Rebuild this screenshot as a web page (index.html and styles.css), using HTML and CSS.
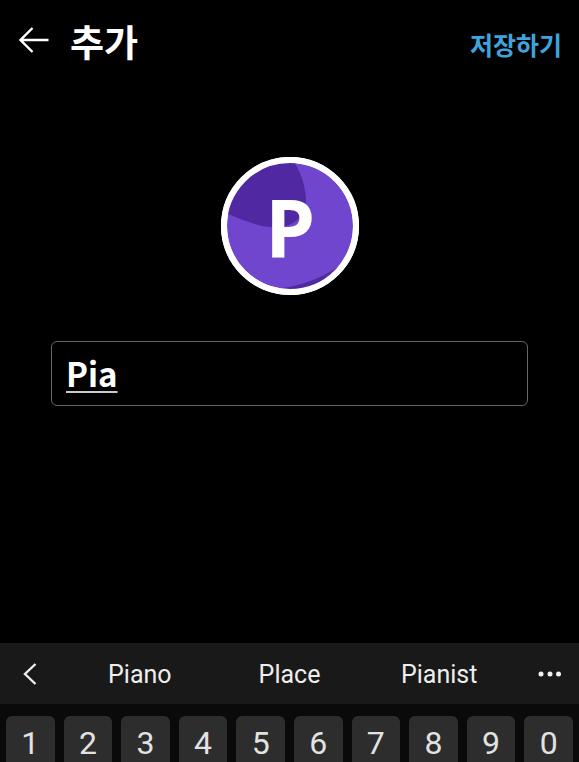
FILE: index.html
```html
<!DOCTYPE html>
<html lang="ko">
<head>
  <meta charset="UTF-8" />
  <meta name="viewport" content="width=device-width, initial-scale=1.0" />
  <title>추가</title>
  <link rel="stylesheet" href="styles.css">
</head>
<body>
  <header class="topbar">
    <button class="back-btn" type="button" aria-label="뒤로">
      <svg width="32" height="28" viewBox="0 0 32 28" fill="none" stroke="#fff" stroke-width="2.4">
        <path d="M14.5 2 2.5 14l12 12M2.5 14H30.5" />
      </svg>
    </button>
    <h1>추가</h1>
    <button class="save-btn" type="button">저장하기</button>
  </header>

  <main class="profile">
    <svg class="avatar" viewBox="0 0 138 138" role="img" aria-label="P">
      <defs>
        <clipPath id="avatar-clip"><circle cx="69" cy="69" r="64" /></clipPath>
      </defs>
      <circle cx="69" cy="69" r="69" fill="#fff" />
      <circle cx="69" cy="69" r="63" fill="#7046cf" />
      <g clip-path="url(#avatar-clip)" fill="#5029a2">
        <path d="M0 54 7 57Q25 65 41 69Q61 73 72 66Q84 59 85 42Q84 23 74 6V0H0Z" />
        <path d="M50 132Q88 130 120 108L138 96V138H50Z" />
      </g>
      <circle cx="69" cy="69" r="66" fill="none" stroke="#fff" stroke-width="6" />
      <text class="avatar-letter" x="69" y="101" text-anchor="middle">P</text>
    </svg>
    <input class="name-input" type="text" value="Pia" aria-label="이름" spellcheck="false" />
  </main>

  <section class="keyboard" aria-label="키보드">
    <div class="suggestions">
      <button class="side-btn" type="button" aria-label="이전">
        <svg width="14" height="22" viewBox="0 0 14 22" fill="none" stroke="#eee" stroke-width="2.4">
          <path d="M12.5 1 2 11l10.5 10" />
        </svg>
      </button>
      <div class="words">
        <button class="word" type="button">Piano</button>
        <button class="word" type="button">Place</button>
        <button class="word" type="button">Pianist</button>
      </div>
      <button class="side-btn" type="button" aria-label="더보기">
        <svg width="24" height="6" viewBox="0 0 24 6" fill="#f2f2f2">
          <circle cx="4" cy="3" r="2.5" />
          <circle cx="13" cy="3" r="2.5" />
          <circle cx="21.5" cy="3" r="2.5" />
        </svg>
      </button>
    </div>
    <div class="keys">
      <button class="key" type="button">1</button>
      <button class="key" type="button">2</button>
      <button class="key" type="button">3</button>
      <button class="key" type="button">4</button>
      <button class="key" type="button">5</button>
      <button class="key" type="button">6</button>
      <button class="key" type="button">7</button>
      <button class="key" type="button">8</button>
      <button class="key" type="button">9</button>
      <button class="key" type="button">0</button>
    </div>
  </section>
</body>
</html>
```

FILE: styles.css
```css
:root {
  --bg-color: #000;
  --bar-bg: #191919;
  --keyboard-bg: #0a0a0a;
  --key-bg: #2d2d2d;
  --accent: #3fa4dd;
  --text-color: #fff;
}

* {
  box-sizing: border-box;
}

body {
  background: var(--bg-color);
  color: var(--text-color);
  font-family: 'Noto Sans CJK KR', sans-serif;
  margin: 0;
  display: flex;
  flex-direction: column;
  height: 100vh;
  overflow: hidden;
}

button {
  background: none;
  border: none;
  padding: 0;
  color: inherit;
  font-family: inherit;
  cursor: pointer;
}

svg {
  display: block;
}

.topbar {
  display: flex;
  align-items: center;
  height: 84px;
  padding: 0 17px 0 18px;
}

.back-btn {
  padding-bottom: 4px;
}

.topbar h1 {
  margin: 0 auto 2px 20px;
  font-size: 37px;
  line-height: 48px;
}

.save-btn {
  padding-top: 4px;
  color: var(--accent);
  font-size: 25px;
  font-weight: bold;
}

.profile {
  flex: 1;
  display: flex;
  flex-direction: column;
  align-items: center;
  gap: 46px;
  padding: 73px 51px 0;
}

.avatar {
  width: 138px;
  height: 138px;
}

.avatar-letter {
  fill: #fff;
  font-family: 'Open Sans', sans-serif;
  font-size: 80px;
  font-weight: bold;
}

.name-input {
  width: 100%;
  height: 65px;
  padding: 0 14px 2px;
  border: 1px solid #666;
  border-radius: 6px;
  outline: none;
  background: transparent;
  color: var(--text-color);
  font-family: inherit;
  font-size: 33px;
  font-weight: bold;
  text-decoration: underline #ccc;
  text-decoration-thickness: 2px;
  text-underline-offset: 4px;
}

.keyboard {
  background: var(--keyboard-bg);
  font-family: Roboto, sans-serif;
}

.suggestions {
  display: flex;
  height: 61px;
  background: var(--bar-bg);
}

.side-btn {
  width: 60px;
  display: flex;
  align-items: center;
  justify-content: center;
}

.words {
  flex: 1;
  display: flex;
  padding: 2px 5px 0;
}

.word {
  flex: 1;
  font-size: 25px;
  color: #eee;
}

/* the row runs off the bottom of the screen */
.keys {
  display: flex;
  gap: 9px;
  height: 58px;
  padding: 12px 6px 0;
}

.key {
  flex: 1;
  height: 54px;
  border-radius: 6px;
  background: var(--key-bg);
  color: #e2e2e2;
  font-size: 32px;
}
```
